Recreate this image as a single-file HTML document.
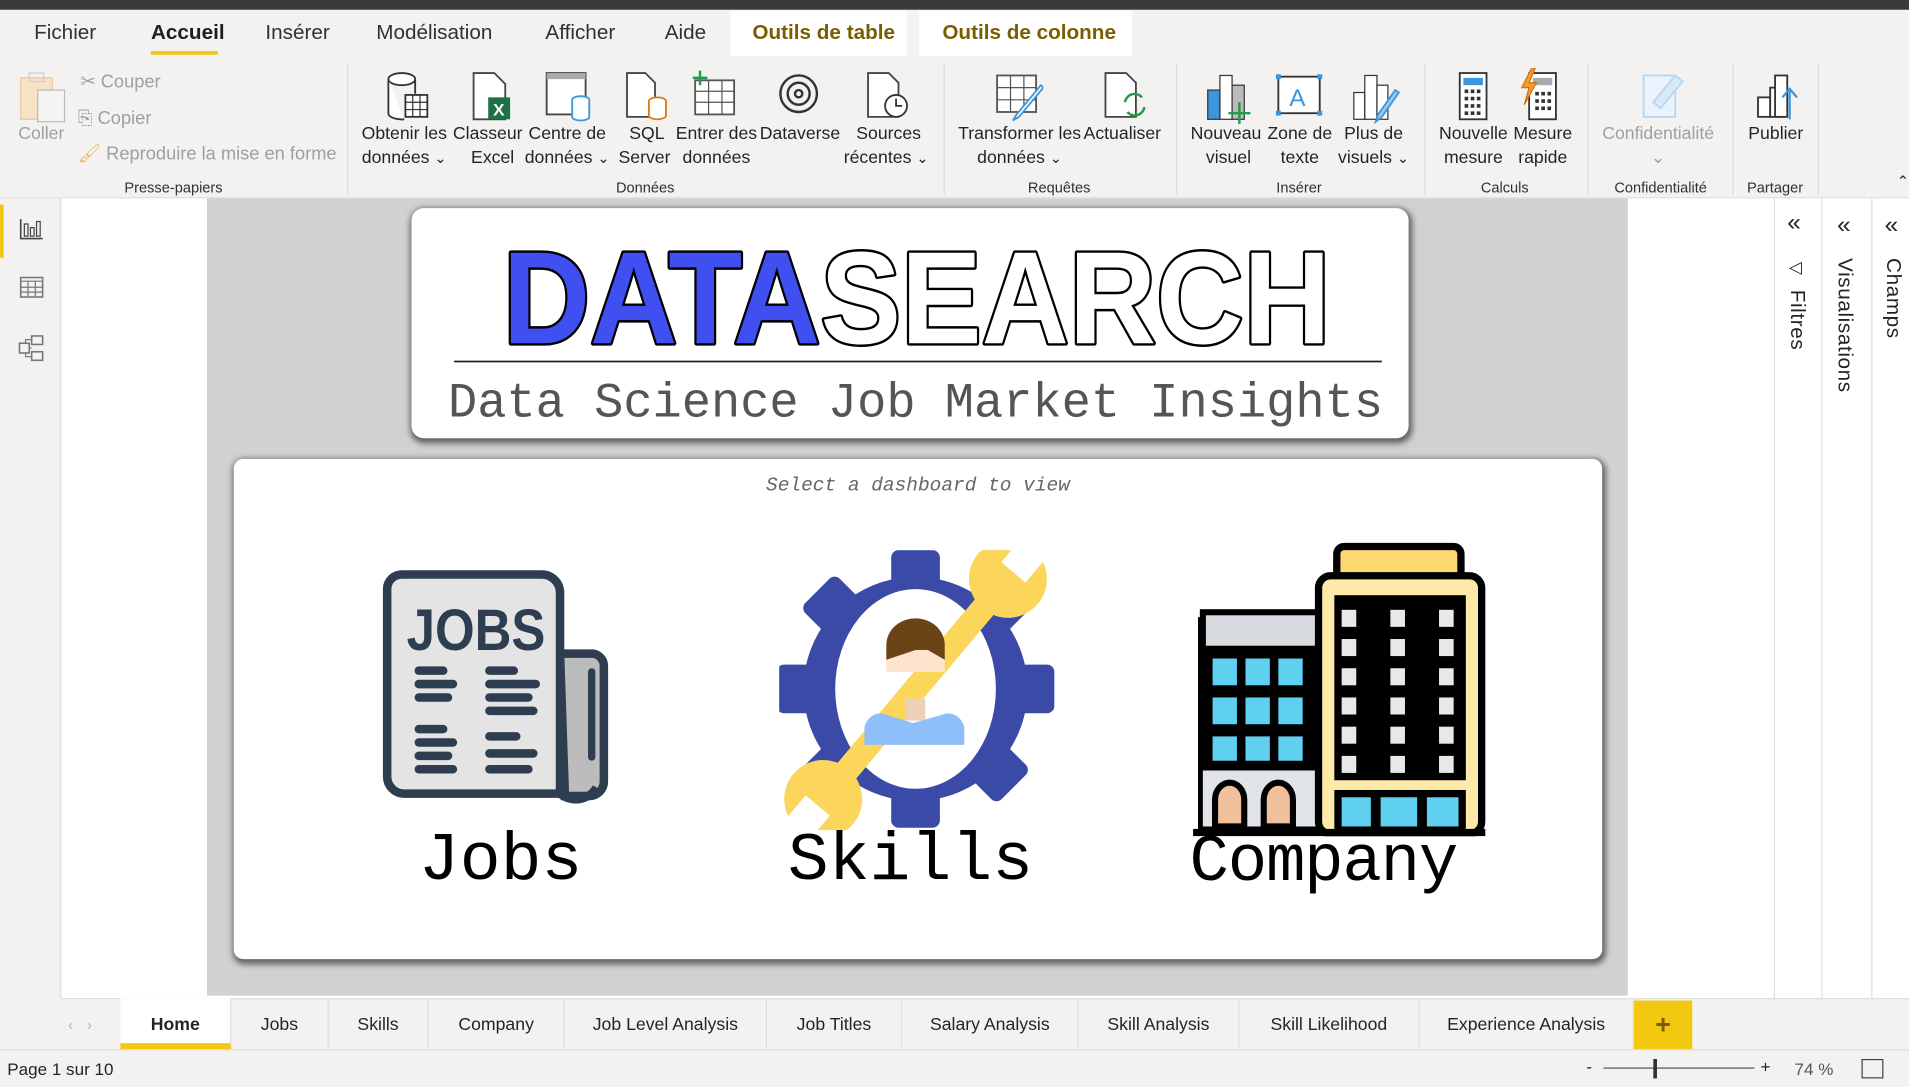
<!DOCTYPE html>
<html><head><meta charset="utf-8">
<style>
*{margin:0;padding:0;box-sizing:border-box}
html,body{width:1909px;height:1087px;overflow:hidden;background:#f3f2f1;font-family:"Liberation Sans",sans-serif;color:#252423}
#w{position:absolute;left:0;top:0;width:1568px;height:893px;transform:scale(1.21747,1.2172);transform-origin:0 0;background:#f3f2f1}
.a{position:absolute}
.t{position:absolute;font-size:17px;color:#323130;top:17px}
.b{position:absolute;text-align:center;font-size:14.5px;line-height:20px;color:#252423;white-space:nowrap}
.g{position:absolute;top:147px;font-size:12px;color:#323130;text-align:center}
.sep{position:absolute;top:52px;width:1px;height:108px;background:#dcdad8}
.dis{color:#a19f9d}
.pt{position:absolute;top:820px;height:42px;border-right:1px solid #e1dfdd;font-size:14.5px;line-height:44px;text-align:center;color:#252423}
.vt{position:absolute;writing-mode:vertical-rl;font-size:17px;color:#252423;letter-spacing:.5px}
</style></head><body><div id="w">
<div class="a" style="left:0;top:0;width:1568px;height:8px;background:#3b3a39"></div>
<div class="t" style="left:28px">Fichier</div>
<div class="t" style="left:124px;color:#201f1e;font-weight:bold;font-size:17px">Accueil</div>
<div class="a" style="left:124px;top:42px;width:55px;height:3px;background:#f2c811"></div>
<div class="t" style="left:218px">Insérer</div>
<div class="t" style="left:309px">Modélisation</div>
<div class="t" style="left:448px">Afficher</div>
<div class="t" style="left:546px">Aide</div>
<div class="a" style="left:600px;top:9px;width:145px;height:37px;background:#fff"></div>
<div class="t" style="left:618px;color:#7a5d00;font-weight:bold">Outils de table</div>
<div class="a" style="left:755px;top:9px;width:175px;height:37px;background:#fff"></div>
<div class="t" style="left:774px;color:#7a5d00;font-weight:bold">Outils de colonne</div>
<svg class="a" style="left:15px;top:58px" width="42" height="44" viewBox="0 0 42 44"><rect x="2" y="6" width="26" height="34" fill="#f6e3c7" stroke="#ecc89a"/><rect x="9" y="2" width="12" height="7" fill="none" stroke="#ccc"/><rect x="16" y="16" width="22" height="26" fill="#f5f5f5" stroke="#bbb"/></svg>
<div class="b dis" style="left:15px;top:100px">Coller</div>
<div class="b dis" style="left:66px;top:58px;font-size:15px">✂ Couper</div>
<div class="b dis" style="left:64px;top:88px;font-size:15px">⎘ Copier</div>
<div class="b dis" style="left:64px;top:117px;font-size:15px"><span style="color:#e8b86c">🖌</span> Reproduire la mise en forme</div>
<div class="g" style="left:60px;width:165px">Presse-papiers</div>
<div class="sep" style="left:285px"></div>
<svg class="a" style="left:316px;top:58px" width="40" height="42"><ellipse cx="14" cy="7" rx="11" ry="5" fill="#fff" stroke="#333" stroke-width="1.5"/><path d="M3 7v28a11 5 0 0 0 13 5" fill="#fff" stroke="#333" stroke-width="1.5"/><path d="M25 7v12" stroke="#333" stroke-width="1.5"/><rect x="17" y="20" width="18" height="18" fill="#fff" stroke="#333" stroke-width="1.5"/><path d="M17 26h18M17 32h18M23 20v18M29 20v18" stroke="#333"/></svg>
<svg class="a" style="left:386px;top:58px" width="36" height="42"><path d="M3 2h17l9 9v29H3z" fill="#fff" stroke="#444" stroke-width="1.5"/><rect x="15" y="22" width="18" height="18" fill="#1e7145"/><text x="19" y="37" font-size="14" fill="#fff" font-family="Liberation Sans" font-weight="bold">X</text></svg>
<svg class="a" style="left:447px;top:58px" width="42" height="42"><rect x="2" y="2" width="32" height="34" fill="#fff" stroke="#444" stroke-width="1.5"/><rect x="2" y="2" width="32" height="5" fill="#aaa"/><ellipse cx="30" cy="24" rx="7" ry="3" fill="#fff" stroke="#3a96dd" stroke-width="1.5"/><path d="M23 24v14a7 3 0 0 0 14 0V24" fill="#fff" stroke="#3a96dd" stroke-width="1.5"/></svg>
<svg class="a" style="left:513px;top:58px" width="38" height="42"><path d="M2 2h15l8 8v28H2z" fill="#fff" stroke="#444" stroke-width="1.5"/><ellipse cx="27" cy="25" rx="7" ry="3" fill="#fff" stroke="#d87b1a" stroke-width="1.5"/><path d="M20 25v12a7 3 0 0 0 14 0V25" fill="#fff" stroke="#d87b1a" stroke-width="1.5"/></svg>
<svg class="a" style="left:567px;top:56px" width="40" height="42"><rect x="4" y="10" width="32" height="28" fill="#fff" stroke="#555" stroke-width="1.5"/><path d="M4 19h32M4 28h32M15 10v28M26 10v28" stroke="#555"/><path d="M8 2v12M2 8h12" stroke="#1e9e4a" stroke-width="2"/></svg>
<svg class="a" style="left:637px;top:60px" width="38" height="34"><circle cx="19" cy="17" r="15" fill="none" stroke="#333" stroke-width="2"/><circle cx="19" cy="17" r="9" fill="none" stroke="#333" stroke-width="2"/><circle cx="19" cy="17" r="3" fill="none" stroke="#333" stroke-width="2"/></svg>
<svg class="a" style="left:711px;top:58px" width="38" height="42"><path d="M2 2h17l8 8v28H2z" fill="#fff" stroke="#444" stroke-width="1.5"/><circle cx="25" cy="29" r="9" fill="#fff" stroke="#333" stroke-width="1.5"/><path d="M25 23v6h5" stroke="#333" fill="none" stroke-width="1.5"/></svg>
<div class="b" style="left:297px;top:100px">Obtenir les<br>données <small>⌄</small></div>
<div class="b" style="left:372px;top:100px">Classeur<br>&nbsp;&nbsp;Excel</div>
<div class="b" style="left:431px;top:100px">Centre de<br>données <small>⌄</small></div>
<div class="b" style="left:508px;top:100px">&nbsp;SQL<br>Server</div>
<div class="b" style="left:555px;top:100px">Entrer des<br>données</div>
<div class="b" style="left:624px;top:100px">Dataverse</div>
<div class="b" style="left:693px;top:100px">&nbsp;Sources<br>récentes <small>⌄</small></div>
<div class="g" style="left:490px;width:80px">Données</div>
<div class="sep" style="left:775px"></div>
<svg class="a" style="left:817px;top:58px" width="40" height="42"><rect x="2" y="4" width="32" height="30" fill="#fff" stroke="#555" stroke-width="1.5"/><path d="M2 14h32M2 24h32M13 4v30M24 4v30" stroke="#555"/><path d="M38 12L18 36l-3 5 5-3 20-24z" fill="#fff" stroke="#3a96dd" stroke-width="1.5"/></svg>
<svg class="a" style="left:906px;top:58px" width="38" height="42"><path d="M2 2h17l8 8v28H2z" fill="#fff" stroke="#444" stroke-width="1.5"/><path d="M18 26a8 8 0 0 1 14-4M34 30a8 8 0 0 1-14 4" fill="none" stroke="#1e9e4a" stroke-width="2"/></svg>
<div class="b" style="left:787px;top:100px">Transformer les<br>données <small>⌄</small></div>
<div class="b" style="left:890px;top:100px">Actualiser</div>
<div class="g" style="left:830px;width:80px">Requêtes</div>
<div class="sep" style="left:966px"></div>
<svg class="a" style="left:990px;top:60px" width="38" height="42"><rect x="2" y="14" width="10" height="24" fill="#3a96dd" stroke="#333"/><rect x="12" y="2" width="10" height="36" fill="#fff" stroke="#333"/><rect x="22" y="10" width="10" height="28" fill="#bbb" stroke="#333"/><path d="M28 24v18M19 33h18" stroke="#1e9e4a" stroke-width="2"/></svg>
<svg class="a" style="left:1047px;top:60px" width="40" height="40"><rect x="3" y="3" width="34" height="30" fill="#fff" stroke="#333" stroke-width="1.5"/><rect x="1" y="1" width="4" height="4" fill="#3a96dd"/><rect x="35" y="1" width="4" height="4" fill="#3a96dd"/><rect x="1" y="31" width="4" height="4" fill="#3a96dd"/><rect x="35" y="31" width="4" height="4" fill="#3a96dd"/><text x="12" y="27" font-size="20" fill="#3a96dd" font-family="Liberation Sans">A</text></svg>
<svg class="a" style="left:1110px;top:60px" width="40" height="42"><rect x="2" y="16" width="9" height="22" fill="#fff" stroke="#333"/><rect x="11" y="2" width="10" height="36" fill="#fff" stroke="#333"/><rect x="21" y="10" width="9" height="28" fill="#fff" stroke="#333"/><path d="M36 14L22 34l-2 6 5-4 14-20z" fill="#9cc8ee" stroke="#3a96dd" stroke-width="1.5"/></svg>
<div class="b" style="left:978px;top:100px">Nouveau<br>&nbsp;visuel</div>
<div class="b" style="left:1041px;top:100px">Zone de<br>texte</div>
<div class="b" style="left:1099px;top:100px">Plus de<br>visuels <small>⌄</small></div>
<div class="g" style="left:1027px;width:80px">Insérer</div>
<div class="sep" style="left:1170px"></div>
<svg class="a" style="left:1197px;top:58px" width="26" height="42"><rect x="2" y="2" width="22" height="38" fill="#fff" stroke="#333" stroke-width="1.5"/><rect x="5" y="6" width="16" height="6" fill="#3a96dd"/><path d="M6 17h3M11 17h3M16 17h3M6 23h3M11 23h3M16 23h3M6 29h3M11 29h3M16 29h3M6 35h3M11 35h3M16 35h3" stroke="#333" stroke-width="3"/></svg>
<svg class="a" style="left:1246px;top:56px" width="36" height="44"><rect x="10" y="4" width="22" height="38" fill="#fff" stroke="#333" stroke-width="1.5"/><rect x="13" y="8" width="16" height="6" fill="#aaa"/><path d="M15 21h3M20 21h3M25 21h3M15 27h3M20 27h3M25 27h3M15 33h3M20 33h3M25 33h3" stroke="#333" stroke-width="3"/><path d="M12 0L4 16h6l-4 14 10-18h-6l5-12z" fill="#f0a030" stroke="#d07010"/></svg>
<div class="b" style="left:1182px;top:100px">Nouvelle<br>mesure</div>
<div class="b" style="left:1243px;top:100px">Mesure<br>rapide</div>
<div class="g" style="left:1196px;width:80px">Calculs</div>
<div class="sep" style="left:1304px"></div>
<svg class="a" style="left:1346px;top:58px" width="40" height="42"><rect x="4" y="4" width="26" height="34" fill="#eaf3fb" stroke="#b8d6ee" stroke-width="1.5"/><path d="M12 26l18-22 6 5-18 22z" fill="#d7e8f6" stroke="#b8d6ee" stroke-width="1.5"/></svg>
<div class="b dis" style="left:1316px;top:100px">Confidentialité<br>⌄</div>
<div class="g" style="left:1310px;width:108px">Confidentialité</div>
<div class="sep" style="left:1423px"></div>
<svg class="a" style="left:1442px;top:58px" width="36" height="44"><rect x="2" y="22" width="10" height="16" fill="#fff" stroke="#333" stroke-width="1.5"/><rect x="12" y="14" width="10" height="24" fill="#fff" stroke="#333" stroke-width="1.5"/><rect x="16" y="4" width="10" height="34" fill="#fff" stroke="#333" stroke-width="1.5"/><path d="M28 40V16M22 22l6-7 6 7" fill="none" stroke="#3a96dd" stroke-width="1.8"/></svg>
<div class="b" style="left:1436px;top:100px">Publier</div>
<div class="g" style="left:1428px;width:60px">Partager</div>
<div class="sep" style="left:1493px"></div>
<div class="a" style="left:1558px;top:142px;font-size:12px">⌃</div>
<div class="a" style="left:0;top:162px;width:1568px;height:1px;background:#e1dfdd"></div>
<div class="a" style="left:0;top:163px;width:50px;height:657px;background:#f3f2f1;border-right:1px solid #e1dfdd"></div>
<div class="a" style="left:0;top:168px;width:3px;height:44px;background:#f2c811"></div>
<svg class="a" style="left:15px;top:178px" width="22" height="20"><path d="M2 2v16h18" fill="none" stroke="#444" stroke-width="1.3"/><rect x="5" y="6" width="3" height="10" fill="none" stroke="#444"/><rect x="10" y="9" width="3" height="7" fill="none" stroke="#444"/><rect x="15" y="4" width="3" height="12" fill="none" stroke="#444"/></svg>
<svg class="a" style="left:15px;top:226px" width="22" height="20"><rect x="2" y="2" width="18" height="16" fill="none" stroke="#777" stroke-width="1.3"/><path d="M2 5h18M2 10h18M2 14h18M8 5v13M14 5v13" stroke="#777"/></svg>
<svg class="a" style="left:14px;top:274px" width="24" height="24"><rect x="2" y="8" width="8" height="8" fill="none" stroke="#777" stroke-width="1.3"/><rect x="12" y="2" width="9" height="7" fill="none" stroke="#777" stroke-width="1.3"/><rect x="12" y="15" width="9" height="7" fill="none" stroke="#777" stroke-width="1.3"/><path d="M10 12h2M7 8V5h5M7 16v3h5" fill="none" stroke="#777"/></svg>
<div class="a" style="left:51px;top:163px;width:1406px;height:657px;background:#fff"></div>
<div class="a" style="left:170px;top:163px;width:1167px;height:655px;background:#d3d1d0"></div>
<div class="a" style="left:338px;top:171px;width:819px;height:189px;background:#fff;border-radius:10px;box-shadow:1px 2px 5px 2px #666"></div>
<svg class="a" style="left:338px;top:171px" width="819" height="189">
<text x="75" y="111" font-family="Liberation Sans" font-weight="bold" font-size="108" textLength="680" lengthAdjust="spacingAndGlyphs" stroke="#000" stroke-width="4" paint-order="stroke" stroke-linejoin="round"><tspan fill="#4050f0">DATA</tspan><tspan fill="#fff">SEARCH</tspan></text>
<line x1="35" y1="126" x2="797" y2="126" stroke="#222" stroke-width="1.5"/>
<text x="30" y="171" font-family="Liberation Mono" font-size="40" fill="#555" textLength="768" lengthAdjust="spacingAndGlyphs">Data Science Job Market Insights</text>
</svg>
<div class="a" style="left:192px;top:377px;width:1124px;height:411px;background:#fff;border-radius:8px;box-shadow:1px 2px 5px 2px #666"></div>
<div class="a" style="left:192px;top:390px;width:1124px;text-align:center;font-family:'Liberation Mono',monospace;font-style:italic;font-size:16px;color:#666">Select a dashboard to view</div>
<svg class="a" style="left:310px;top:462px" width="200" height="205">
<path d="M150 75h26a10 10 0 0 1 10 10v95a12 12 0 0 1-12 12h-20z" fill="#bcbcbc" stroke="#2e3d4f" stroke-width="7"/>
<path d="M20 10h115a15 15 0 0 1 15 15v165H22a14 14 0 0 1-14-14V22a12 12 0 0 1 12-12z" fill="#e4e4e4" stroke="#2e3d4f" stroke-width="7"/>
<path d="M150 190a20 20 0 0 0 30-5" fill="none" stroke="#2e3d4f" stroke-width="7"/>
<path d="M176 90v70" stroke="#2e3d4f" stroke-width="6" stroke-linecap="round"/>
<text x="24" y="72" font-family="Liberation Sans" font-weight="bold" font-size="48" fill="#2e3d4f" textLength="114" lengthAdjust="spacingAndGlyphs">JOBS</text>
<g stroke="#2e3d4f" stroke-width="7" stroke-linecap="round"><path d="M34 89h20M34 100h28M34 111h24M92 89h20M92 100h38M92 111h32M92 122h36M34 137h20M34 148h28M34 159h24M34 170h28M92 143h22M92 157h36M92 170h32"/></g>
</svg>
<div class="a" style="left:344px;top:672px;font-family:'Liberation Mono',monospace;font-size:56px;color:#000;line-height:70px">Jobs</div>
<svg class="a" style="left:640px;top:452px" width="228" height="230" viewBox="0 0 228 230">
<defs>
<mask id="m1"><rect x="-200" y="-200" width="400" height="400" fill="#fff"/><rect x="-13" y="-170" width="26" height="45" fill="#000"/><rect x="-13" y="125" width="26" height="45" fill="#000"/></mask>
</defs>
<g fill="#3a4aa6" transform="translate(112 114)">
<g id="tt"><rect x="-20" y="-114" width="40" height="40" rx="6"/></g>
<use href="#tt" transform="rotate(45)"/><use href="#tt" transform="rotate(90)"/><use href="#tt" transform="rotate(135)"/><use href="#tt" transform="rotate(180)"/><use href="#tt" transform="rotate(225)"/><use href="#tt" transform="rotate(270)"/><use href="#tt" transform="rotate(315)"/>
<ellipse rx="92" ry="92"/>
<ellipse rx="66" ry="82" fill="#fff"/>
</g>
<g transform="translate(112 114) rotate(40)" fill="#fcd55b" mask="url(#m1)">
<rect x="-10" y="-105" width="20" height="210"/>
<circle cx="0" cy="-118" r="32"/>
<circle cx="0" cy="118" r="32"/>
</g>
<path d="M88 100v-18a24 26 0 0 1 48 0v18z" fill="#fde4cc"/>
<path d="M88 90v-12a24 22 0 0 1 48 0v12l-14-8-10 0z" fill="#6b4415"/>
<rect x="104" y="122" width="16" height="18" fill="#eed0b8"/>
<path d="M70 160v-14a14 14 0 0 1 14-12l26 8 28-8a14 14 0 0 1 14 12v14z" fill="#8fbff8"/>
</svg>
<div class="a" style="left:647px;top:672px;font-family:'Liberation Mono',monospace;font-size:56px;color:#000;line-height:70px">Skills</div>
<svg class="a" style="left:978px;top:445px" width="245" height="242">
<rect x="6" y="62" width="100" height="176" fill="#000"/>
<rect x="10" y="58" width="100" height="30" fill="#d8dbe0" stroke="#000" stroke-width="5"/>
<g fill="#5fd0ef"><rect x="18" y="96" width="20" height="22"/><rect x="45" y="96" width="20" height="22"/><rect x="72" y="96" width="20" height="22"/><rect x="18" y="128" width="20" height="22"/><rect x="45" y="128" width="20" height="22"/><rect x="72" y="128" width="20" height="22"/><rect x="18" y="160" width="20" height="20"/><rect x="45" y="160" width="20" height="20"/><rect x="72" y="160" width="20" height="20"/></g>
<rect x="10" y="188" width="94" height="46" fill="#e0e3e8"/>
<path d="M20 234v-22a12 14 0 0 1 24 0v22zM60 234v-22a12 14 0 0 1 24 0v22z" fill="#f0c09c" stroke="#000" stroke-width="5"/>
<rect x="120" y="4" width="102" height="30" rx="6" fill="#fdd870" stroke="#000" stroke-width="6"/>
<rect x="105" y="28" width="134" height="212" rx="10" fill="#fde9a8" stroke="#000" stroke-width="6"/>
<rect x="118" y="44" width="108" height="152" fill="#000"/>
<g fill="#e8e8e8"><rect x="124" y="56" width="12" height="14"/><rect x="164" y="56" width="12" height="14"/><rect x="204" y="56" width="12" height="14"/><rect x="124" y="80" width="12" height="14"/><rect x="164" y="80" width="12" height="14"/><rect x="204" y="80" width="12" height="14"/><rect x="124" y="104" width="12" height="14"/><rect x="164" y="104" width="12" height="14"/><rect x="204" y="104" width="12" height="14"/><rect x="124" y="128" width="12" height="14"/><rect x="164" y="128" width="12" height="14"/><rect x="204" y="128" width="12" height="14"/><rect x="124" y="152" width="12" height="14"/><rect x="164" y="152" width="12" height="14"/><rect x="204" y="152" width="12" height="14"/><rect x="124" y="176" width="12" height="14"/><rect x="164" y="176" width="12" height="14"/><rect x="204" y="176" width="12" height="14"/></g>
<rect x="118" y="204" width="108" height="34" fill="#000"/>
<g fill="#5fd0ef"><rect x="124" y="210" width="24" height="24"/><rect x="156" y="210" width="30" height="24"/><rect x="194" y="210" width="26" height="24"/></g>
<rect x="2" y="236" width="240" height="6" fill="#000"/>
</svg>
<div class="a" style="left:977px;top:680px;font-family:'Liberation Mono',monospace;font-size:54px;color:#000;line-height:60px;letter-spacing:-1px">Company</div>
<div class="a" style="left:1457px;top:163px;width:111px;height:657px;background:#fff"></div>
<div class="a" style="left:1457px;top:163px;width:1px;height:657px;background:#e1dfdd"></div>
<div class="a" style="left:1496px;top:163px;width:1px;height:657px;background:#e1dfdd"></div>
<div class="a" style="left:1537px;top:163px;width:1px;height:657px;background:#e1dfdd"></div>
<div class="a" style="left:1468px;top:172px;font-size:20px">«</div>
<div class="a" style="left:1509px;top:174px;font-size:20px">«</div>
<div class="a" style="left:1548px;top:174px;font-size:20px">«</div>
<div class="a" style="left:1470px;top:212px;font-size:14px;transform:rotate(90deg)">▽</div>
<div class="vt" style="left:1466px;top:238px">Filtres</div>
<div class="vt" style="left:1505px;top:212px">Visualisations</div>
<div class="vt" style="left:1545px;top:212px">Champs</div>
<div class="a" style="left:50px;top:820px;width:1518px;height:1px;background:#e1dfdd"></div>
<div class="a" style="left:56px;top:834px;font-size:13px;color:#bbb">‹ &nbsp; ›</div>
<div class="pt" style="left:99px;width:91px;background:#fff;font-weight:bold;border-bottom:5px solid #f2c811">Home</div>
<div class="pt" style="left:190px;width:80px">Jobs</div>
<div class="pt" style="left:270px;width:82px">Skills</div>
<div class="pt" style="left:352px;width:112px">Company</div>
<div class="pt" style="left:464px;width:166px">Job Level Analysis</div>
<div class="pt" style="left:630px;width:111px">Job Titles</div>
<div class="pt" style="left:741px;width:145px">Salary Analysis</div>
<div class="pt" style="left:886px;width:132px">Skill Analysis</div>
<div class="pt" style="left:1018px;width:148px">Skill Likelihood</div>
<div class="pt" style="left:1166px;width:176px">Experience Analysis</div>
<div class="a" style="left:1342px;top:822px;width:48px;height:40px;background:#f2c811;text-align:center;font-size:22px;line-height:40px;color:#7a5d00;font-weight:bold">+</div>
<div class="a" style="left:0;top:862px;width:1568px;height:1px;background:#e1dfdd"></div>
<div class="a" style="left:6px;top:870px;font-size:14px">Page 1 sur 10</div>
<div class="a" style="left:1303px;top:868px;font-size:14px">-</div>
<div class="a" style="left:1317px;top:877px;width:124px;height:1px;background:#555"></div>
<div class="a" style="left:1358px;top:870px;width:3px;height:16px;background:#333"></div>
<div class="a" style="left:1446px;top:868px;font-size:14px">+</div>
<div class="a" style="left:1474px;top:870px;font-size:14px;color:#555">74 %</div>
<div class="a" style="left:1529px;top:870px;width:18px;height:16px;border:1.5px solid #444"></div>
</div></body></html>
